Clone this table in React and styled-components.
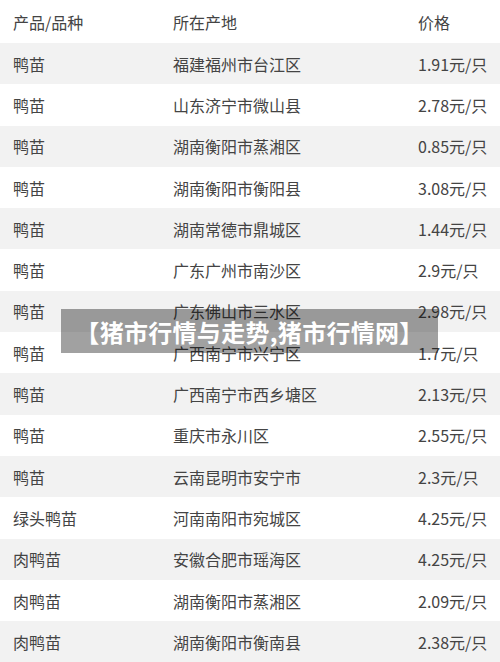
import React from "react";
import styled, { createGlobalStyle } from "styled-components";

const Global = createGlobalStyle`
  html, body { margin: 0; padding: 0; background: #fff; }
  body { font-family: "Noto Sans CJK SC", "Noto Sans", sans-serif; }
`;

const Page = styled.div`
  position: relative;
  width: 500px;
  height: 662px;
  overflow: hidden;
  background: #fff;
`;

const Row = styled.div`
  display: grid;
  grid-template-columns: 160px 245px 1fr;
  align-items: center;
  padding-left: 13px;
  height: ${(p) => (p.$header ? "43px" : "41.3px")};
  background: ${(p) => (p.$shaded ? "#f2f2f2" : "#fff")};
  color: #444;
  font-size: 16px;
  line-height: 1;
`;

const Cell = styled.div`
  white-space: nowrap;
`;

const Banner = styled.div`
  position: absolute;
  left: 61px;
  top: 309px;
  width: 377px;
  height: 44px;
  display: flex;
  align-items: center;
  justify-content: center;
  background: rgba(0, 0, 0, 0.37);
  color: #fff;
  font-weight: 700;
  font-size: 24px;
  letter-spacing: 0.3px;
  white-space: nowrap;
`;

const data = [
  ["鸭苗", "福建福州市台江区", "1.91元/只"],
  ["鸭苗", "山东济宁市微山县", "2.78元/只"],
  ["鸭苗", "湖南衡阳市蒸湘区", "0.85元/只"],
  ["鸭苗", "湖南衡阳市衡阳县", "3.08元/只"],
  ["鸭苗", "湖南常德市鼎城区", "1.44元/只"],
  ["鸭苗", "广东广州市南沙区", "2.9元/只"],
  ["鸭苗", "广东佛山市三水区", "2.98元/只"],
  ["鸭苗", "广西南宁市兴宁区", "1.7元/只"],
  ["鸭苗", "广西南宁市西乡塘区", "2.13元/只"],
  ["鸭苗", "重庆市永川区", "2.55元/只"],
  ["鸭苗", "云南昆明市安宁市", "2.3元/只"],
  ["绿头鸭苗", "河南南阳市宛城区", "4.25元/只"],
  ["肉鸭苗", "安徽合肥市瑶海区", "4.25元/只"],
  ["肉鸭苗", "湖南衡阳市蒸湘区", "2.09元/只"],
  ["肉鸭苗", "湖南衡阳市衡南县", "2.38元/只"],
];

export default function App() {
  return (
    <Page>
      <Global />
      <Row $header>
        <Cell>产品/品种</Cell>
        <Cell>所在产地</Cell>
        <Cell>价格</Cell>
      </Row>
      {data.map((r, i) => (
        <Row key={i} $shaded={i % 2 === 0}>
          <Cell>{r[0]}</Cell>
          <Cell>{r[1]}</Cell>
          <Cell>{r[2]}</Cell>
        </Row>
      ))}
      <Banner>【猪市行情与走势,猪市行情网】</Banner>
    </Page>
  );
}
